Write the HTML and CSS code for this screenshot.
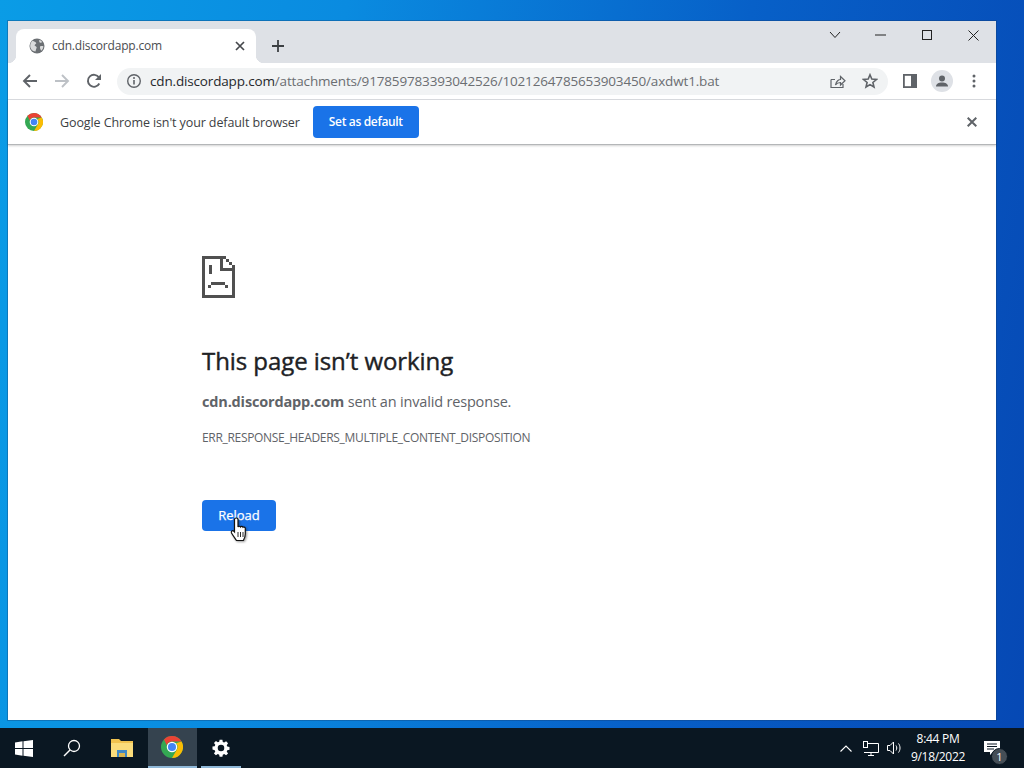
FILE: index.html
```html
<!DOCTYPE html>
<html lang="en">
<head>
<meta charset="utf-8">
<title>This page isn't working</title>
<link rel="stylesheet" href="styles.css">
</head>
<body>
<div class="desktop">
  <div class="window">
    <div class="tabstrip">
      <div class="tab">
        <svg class="tab-globe" width="16" height="16" viewBox="0 0 16 16"><circle cx="8" cy="8" r="7.500" fill="#6b6f73"/><path d="M3.500 2.800c1.800.4 3 1.300 3.800 2.400-.4 1-1.400 1.200-1.800 2 .6 1 1.800 1 2.200 2-.2 1.200-.8 2.200-1.200 4.400C3.500 13.200 1.200 11 1.200 8c0-2 .9-3.900 2.300-5.200zM10.500 1.800c1 .5 2 1.200 2.700 2.300-.6.800-1.500.8-2.300.5-.8-.3-.9-1.800-.4-2.800zM11 8.500c1-.5 2.200-.6 3.400-.2-.1 1.800-.9 3.400-2.100 4.500-.8-1.300-1.600-2.900-1.300-4.300z" fill="#fff" opacity=".75"/></svg>
        <span class="tab-title">cdn.discordapp.com</span>
        <svg class="tab-close" width="10" height="10" viewBox="0 0 10 10"><path d="M1 1l8 8M9 1l-8 8" stroke="#45484c" stroke-width="1.700"/></svg>
      </div>
      <svg class="newtab" width="14" height="14" viewBox="0 0 14 14"><path d="M7 1v12M1 7h12" stroke="#3c4043" stroke-width="1.800"/></svg>
      <div class="caption">
        <svg width="12" height="8" viewBox="0 0 12 8"><path d="M1 1l5 5.500L11 1" fill="none" stroke="#222" stroke-width="1"/></svg>
        <svg width="11" height="2" viewBox="0 0 11 2"><path d="M0 1h11" stroke="#222" stroke-width="1"/></svg>
        <svg width="10" height="10" viewBox="0 0 10 10"><rect x=".5" y=".5" width="9" height="9" fill="none" stroke="#222" stroke-width="1"/></svg>
        <svg width="11" height="11" viewBox="0 0 11 11"><path d="M.5.500l10 10M10.500.500l-10 10" stroke="#222" stroke-width="1"/></svg>
      </div>
    </div>

    <div class="toolbar">
      <svg class="nav" width="16" height="16" viewBox="0 0 16 16"><path d="M15 8H2M8 2L2 8l6 6" fill="none" stroke="#5f6368" stroke-width="1.900"/></svg>
      <svg class="nav" width="16" height="16" viewBox="0 0 16 16"><path d="M1 8h13M8 2l6 6-6 6" fill="none" stroke="#bdc1c6" stroke-width="1.900"/></svg>
      <svg class="nav" width="16" height="16" viewBox="0 0 16 16"><path d="M13.300 10.500A6 6 0 1 1 13 4.600" fill="none" stroke="#5f6368" stroke-width="1.900"/><path d="M15 1v6H9z" fill="#5f6368"/></svg>
      <div class="omnibox">
        <svg width="16" height="16" viewBox="0 0 16 16"><circle cx="8" cy="8" r="6.300" fill="none" stroke="#5f6368" stroke-width="1.400"/><path d="M8 7v4.500" stroke="#5f6368" stroke-width="1.600"/><circle cx="8" cy="5" r="1" fill="#5f6368"/></svg>
        <div class="url"><span class="url-host">cdn.discordapp.com</span>/attachments/917859783393042526/1021264785653903450/axdwt1.bat</div>
        <svg class="omni-share" width="16" height="16" viewBox="0 0 16 16"><path d="M1 6.500V14.500H13V11M1 6.500H5M5.500 12C6 8 9 6.500 10.500 6.500V3.500L15 7.800 10.500 12V9.500C8.500 9.500 6.500 10.500 5.500 12z" fill="none" stroke="#5f6368" stroke-width="1.200"/></svg>
        <svg class="omni-star" width="16" height="16" viewBox="0 0 16 16"><path d="M8 1.800l1.800 4.300 4.600.4-3.500 3 1.100 4.500L8 11.600 4 14l1.100-4.500-3.500-3 4.600-.4z" fill="none" stroke="#5f6368" stroke-width="1.600"/></svg>
      </div>
      <svg class="side" width="14" height="14" viewBox="0 0 14 14"><rect x=".9" y=".9" width="12.200" height="12.200" fill="none" stroke="#5f6368" stroke-width="1.800"/><rect x="8" y="1" width="5" height="12" fill="#5f6368"/></svg>
      <svg class="avatar" width="22" height="22" viewBox="0 0 22 22"><circle cx="11" cy="11" r="11" fill="#dee1e6"/><circle cx="11" cy="8.500" r="3" fill="#5f6368"/><path d="M5 16.500c0-2.500 2.500-4 6-4s6 1.500 6 4z" fill="#5f6368"/></svg>
      <svg class="menu" width="4" height="14" viewBox="0 0 4 14"><circle cx="2" cy="2" r="1.500" fill="#5f6368"/><circle cx="2" cy="7" r="1.500" fill="#5f6368"/><circle cx="2" cy="12" r="1.500" fill="#5f6368"/></svg>
    </div>

    <div class="infobar">
      <svg class="chrome-small" width="18" height="18" viewBox="0 0 48 48"><use href="#chrome"/></svg>
      <span class="info-text">Google Chrome isn't your default browser</span>
      <button class="btn btn-default">Set as default</button>
      <svg class="info-close" width="10" height="10" viewBox="0 0 10 10"><path d="M.7.700l8.600 8.600M9.300.700L.7 9.300" stroke="#5f6368" stroke-width="2"/></svg>
    </div>

    <main class="page">
      <div class="error">
        <svg class="sad" width="33" height="42" viewBox="0 0 33 42" shape-rendering="crispEdges">
          <path d="M0 0h22v3H3v36h27V12h3v30H0z" fill="#505050"/>
          <path d="M18 0h3v12h12v3H18z" fill="#505050"/>
          <path d="M21 0h3v3h-3zM24 3h3v3h-3zM27 6h3v3h-3zM30 9h3v3h-3z" fill="#505050"/>
          <path d="M7 9h3v9H7zM9 26h14v3H9zM6 29h3v3H6zM23 29h3v3h-3z" fill="#505050"/>
        </svg>
        <h1 class="title">This page isn’t working</h1>
        <p class="desc"><strong>cdn.discordapp.com</strong> sent an invalid response.</p>
        <p class="code">ERR_RESPONSE_HEADERS_MULTIPLE_CONTENT_DISPOSITION</p>
        <div class="reload-wrap">
          <button class="btn btn-reload">Reload</button>
          <svg class="cursor" width="20" height="26" viewBox="0 0 20 26"><path d="M4.500 2.500c0-2 3.500-2 3.500 0V10c.5-1 2-1 2.500 0 .6-.8 2-.8 2.500.3.700-.6 2-.3 2.300.8V17c0 3-1 4.500-2 6.500H6.500C5 21 3.500 19.500 1.500 16c-.8-1.500 1-3 2.300-1.800l.7.800z" fill="#fff" stroke="#111" stroke-width="1.200"/><path d="M8 15v5M10.500 15v5M13 15v5" stroke="#111" stroke-width=".9"/></svg>
        </div>
      </div>
    </main>
  </div>
</div>

<footer class="taskbar">
  <div class="task start"><svg width="18" height="17" viewBox="0 0 18 17"><path d="M0 2.400L7.500 1.300v6.700H0zM8.500 1.200L18 0v8H8.500zM0 9h7.500v6.700L0 14.600zM8.500 9H18v8l-9.500-1.300z" fill="#fff"/></svg></div>
  <div class="task search"><svg width="18" height="18" viewBox="0 0 18 18"><circle cx="11" cy="7" r="5.500" fill="none" stroke="#fff" stroke-width="1.300"/><path d="M7 11l-6 6" stroke="#fff" stroke-width="1.500"/></svg></div>
  <div class="task files"><svg width="22" height="18" viewBox="0 0 22 18"><path d="M0 0h8l2 2h12v16H0z" fill="#f0c24f"/><path d="M0 4h22v14H0z" fill="#fadc7b"/><path d="M6 11h10v7h-2v-4H8v4H6z" fill="#3f88c5"/><path d="M8 14h6v4H8z" fill="#d9b650"/></svg></div>
  <div class="task chrome active"><svg width="22" height="22" viewBox="0 0 48 48"><defs><g id="chrome"><circle cx="24" cy="24" r="24" fill="#34a853"/><path d="M24 0a24 24 0 0 1 20.800 12H24a12 12 0 0 0-11.300 8L6.500 7.600A24 24 0 0 1 24 0z" fill="#ea4335"/><path d="M44.800 12A24 24 0 0 1 24 48l10.400-18A12 12 0 0 0 33 16z" fill="#fbbc04"/><circle cx="24" cy="24" r="11.500" fill="#fff"/><circle cx="24" cy="24" r="8.800" fill="#4285f4"/></g></defs><use href="#chrome"/></svg></div>
  <div class="task settings running"><svg width="18" height="18" viewBox="-1 -1 22 22"><path d="M8.300 0h3.400l.5 2.700 1.700.7 2.300-1.600 2.400 2.400-1.600 2.300.7 1.700 2.700.5v3.400l-2.700.5-.7 1.700 1.600 2.300-2.400 2.400-2.300-1.600-1.700.7-.5 2.700H8.300l-.5-2.700-1.700-.7-2.300 1.600-2.400-2.400 1.600-2.300-.7-1.700L-.4 11.700V8.300l2.700-.5.700-1.700-1.600-2.300 2.400-2.400 2.300 1.600 1.700-.7z" fill="#fff"/><circle cx="10" cy="10" r="4" fill="#0a1722"/></svg></div>
  <div class="tray">
    <svg width="12" height="7" viewBox="0 0 12 7"><path d="M.5 6.500L6 1l5.500 5.500" fill="none" stroke="#fff" stroke-width="1.100"/></svg>
    <svg width="16" height="15" viewBox="0 0 16 15"><path d="M5 2.500h10.500v9H1M8 11.500v3M5 14.500h6" fill="none" stroke="#fff"/><rect x=".5" y=".5" width="4" height="6" fill="#0a1722" stroke="#fff"/></svg>
    <svg width="15" height="14" viewBox="0 0 15 14"><path d="M.5 4.500h2.500L6.500 1v12L3 9.500H.5zM9 4.500c1 1.500 1 3.500 0 5M11.500 2.500c2 2.500 2 6.500 0 9" fill="none" stroke="#fff"/></svg>
    <div class="clock"><span>8:44 PM</span><span>9/18/2022</span></div>
    <div class="notify">
      <svg width="16" height="15" viewBox="0 0 16 15"><path d="M0 0h16v11H9l-3 3v-3H0z" fill="#fff"/><path d="M3 3h10M3 5.500h10M3 8h7" stroke="#0a1722"/></svg>
      <span class="badge">1</span>
    </div>
  </div>
</footer>
</body>
</html>
```
FILE: styles.css
```css
* { box-sizing: border-box; }
html, body { margin: 0; height: 100%; }
body {
  width: 1024px;
  height: 768px;
  overflow: hidden;
  display: flex;
  flex-direction: column;
  font-family: "Open Sans", "Noto Sans", sans-serif;
  background: linear-gradient(100deg, #0a9ce6 0%, #0a8be0 30%, #0760c8 65%, #0648b4 100%);
}
.desktop { height: 728px; padding: 21px 28px 8px 8px; display: flex; }
.window {
  flex: 1;
  display: flex;
  flex-direction: column;
  background: #fff;
  box-shadow: 0 0 0 1px rgba(20, 60, 110, .35);
}
svg { display: block; flex: none; }

.tabstrip { height: 42px; background: #dee1e6; display: flex; align-items: flex-end; padding-left: 8px; position: relative; flex: none; }
.tab { position: relative; width: 240px; height: 34px; background: #fff; border-radius: 8px 8px 0 0; display: flex; align-items: center; padding: 0 11px 1px 13px; font-size: 12px; color: #4a4d51; }
.tab::before, .tab::after { content: ""; position: absolute; bottom: 0; width: 8px; height: 8px; }
.tab::before { left: -8px; background: radial-gradient(circle at 0 0, transparent 8px, #fff 8.500px); }
.tab::after { right: -8px; background: radial-gradient(circle at 100% 0, transparent 8px, #fff 8.500px); }
.tab-title { margin-left: 7px; letter-spacing: -.2px; flex: 1; }
.newtab { margin: 0 0 10px 15px; }
.caption { margin-left: auto; align-self: flex-start; display: flex; align-items: center; height: 28px; }
.caption svg:nth-child(1) { margin-right: 34px; }
.caption svg:nth-child(2) { margin-right: 36px; }
.caption svg:nth-child(3) { margin-right: 36px; }
.caption svg:nth-child(4) { margin-right: 17px; }

.toolbar { height: 37px; background: #fff; border-bottom: 1px solid #dadce0; display: flex; align-items: center; padding: 0 0 0 14px; flex: none; }
.toolbar .nav { margin-right: 16px; }
.omnibox { margin-left: -1px; width: 771px; height: 27px; border-radius: 14px; background: #f1f3f4; display: flex; align-items: center; padding: 0 10px 0 9px; }
.url { margin-left: 8px; font-size: 13.500px; color: #6b6e72; letter-spacing: -.16px; white-space: nowrap; flex: 1; }
.url-host { color: #26282b; }
.omni-share { margin-right: 16px; }
.side { margin-left: 15px; }
.avatar { margin-left: 14px; }
.menu { margin-left: 19px; }

.infobar { height: 45px; background: #fff; border-bottom: 1px solid #b4b6b8; box-shadow: 0 1px 2px rgba(0,0,0,.18); display: flex; align-items: center; padding: 0 19px 0 17px; flex: none; position: relative; }
.info-text { margin-left: 17px; font-size: 12.500px; color: #3c4043; letter-spacing: -.1px; }
.btn { border: 0; background: #1a73e8; color: #fff; font-family: inherit; font-weight: 600; border-radius: 4px; padding: 0; }
.btn-default { width: 106px; height: 32px; margin-left: 13px; padding-bottom: 1px; font-size: 12px; letter-spacing: -.35px; }
.info-close { margin-left: auto; }

.page { flex: 1; padding: 111px 0 0 194px; }
.error { display: flex; flex-direction: column; align-items: flex-start; }
.title { margin: 45px 0 0; font-size: 24px; line-height: 36px; font-weight: 400; color: #202124; letter-spacing: -.07px; -webkit-text-stroke: .4px #202124; }
.desc { margin: 13px 0 0; font-size: 14.500px; line-height: 20px; color: #5f6368; letter-spacing: -.17px; }
.desc strong { font-weight: 700; }
.code { margin: 18px 0 0; font-size: 12px; line-height: 16px; color: #5f6368; letter-spacing: -.32px; }
.reload-wrap { margin-top: 54px; position: relative; }
.btn-reload { display: block; width: 74px; height: 31px; padding-bottom: 1px; font-size: 13px; font-weight: 400; -webkit-text-stroke: .25px #fff; }
.cursor { position: absolute; left: 28px; top: 17px; filter: drop-shadow(1px 1px 1px rgba(0,0,0,.4)); }

.taskbar { height: 40px; background: #0a1722; display: flex; align-items: stretch; flex: none; }
.task { display: flex; align-items: center; justify-content: center; height: 40px; }
.start { width: 48px; }
.search { width: 48px; }
.files { width: 52px; }
.chrome { width: 49px; padding-right: 1px; background: #35434f; border-bottom: 2px solid #8fb8d8; }
.settings { width: 49px; padding-right: 1px; position: relative; }
.settings::after { content: ""; position: absolute; left: 4px; right: 5px; bottom: 0; height: 2px; background: #8fb8d8; }
.tray { margin-left: auto; display: flex; align-items: center; padding-right: 13px; color: #fff; }
.tray svg:nth-child(1) { margin-right: 11px; }
.tray svg:nth-child(2) { margin-right: 8px; }
.clock { margin-left: 8px; width: 56px; display: flex; flex-direction: column; align-items: center; font-size: 12px; line-height: 18px; letter-spacing: -.3px; }
.notify { margin-left: 18px; position: relative; }
.badge { position: absolute; left: 7px; top: 7px; width: 17px; height: 17px; border-radius: 50%; background: #454e56; border: 1px solid #0a1722; color: #fff; font-size: 11px; line-height: 15px; text-align: center; }
```
